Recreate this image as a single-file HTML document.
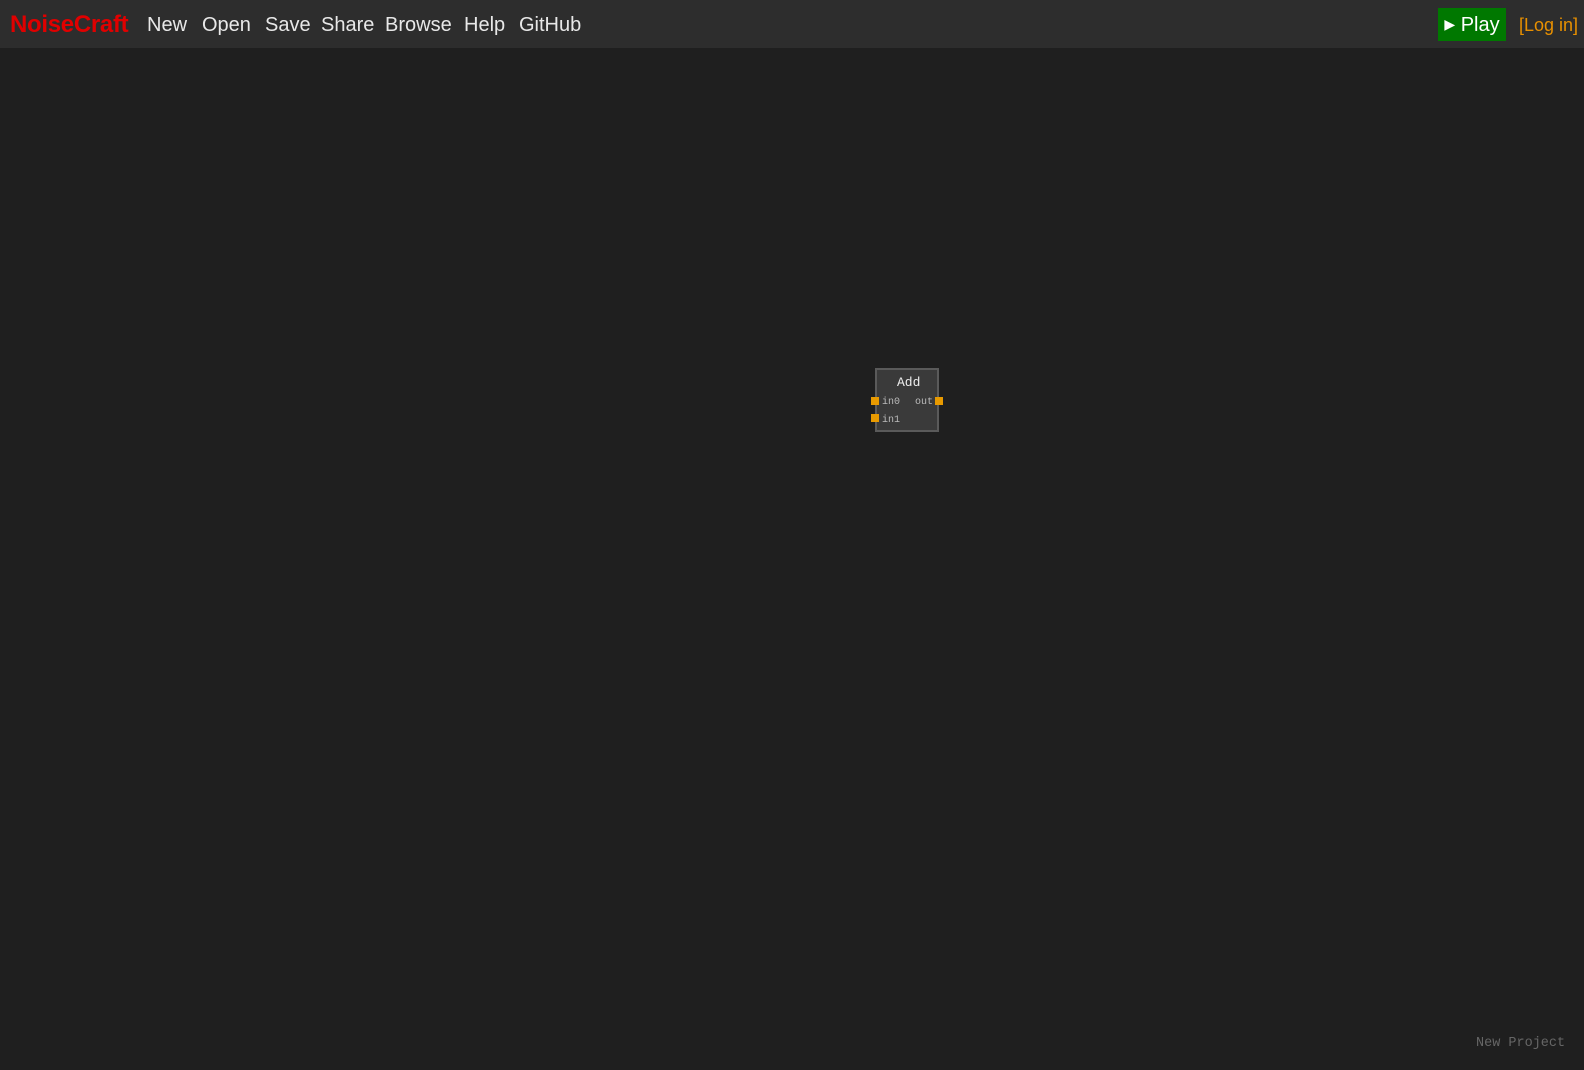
<!DOCTYPE html>
<html><head><style>
body{margin:0;width:1584px;height:1070px;background:#1f1f1f;overflow:hidden;position:relative;font-family:"Liberation Sans",sans-serif}
#hdr{position:absolute;left:0;top:0;width:1584px;height:48px;background:#2d2d2d}
.t{position:absolute;top:14px;font-size:20px;color:#e8e8e8;white-space:nowrap}
#logo{left:10px;color:#e00000;font-weight:bold;font-size:24px;top:11px;letter-spacing:-0.3px}
#play{position:absolute;left:1438px;top:8px;width:68px;height:33px;background:#007800;color:#fff;font-size:20px;line-height:34px;text-align:center}
#play small{font-size:14px;position:relative;top:-2px}
#login{left:1519px;color:#e89000;font-size:18px;top:15px}
#node{position:absolute;left:875px;top:368px;width:64px;height:64px;background:#3a3a3a;border:2px solid #5a5a5a;box-sizing:border-box}
.m{font-family:"Liberation Mono",monospace;position:absolute;white-space:nowrap}
.p{position:absolute;width:8px;height:8px;background:#e89a00}
</style></head><body>
<div id="hdr">
<span class="t" id="logo">NoiseCraft</span>
<span class="t" style="left:147px">New</span>
<span class="t" style="left:202px">Open</span>
<span class="t" style="left:265px">Save</span>
<span class="t" style="left:321px">Share</span>
<span class="t" style="left:385px">Browse</span>
<span class="t" style="left:464px">Help</span>
<span class="t" style="left:519px">GitHub</span>
<div id="play"><small>&#9654;</small> Play</div>
<span class="t" id="login">[Log in]</span>
</div>
<div id="node">
<span class="m" style="left:20px;top:5px;font-size:13px;color:#eee">Add</span>
<span class="m" style="left:5px;top:27px;font-size:10px;color:#bbb">in0</span>
<span class="m" style="left:38px;top:27px;font-size:10px;color:#bbb">out</span>
<span class="m" style="left:5px;top:45px;font-size:10px;color:#bbb">in1</span>
</div>
<div class="p" style="left:871px;top:397px"></div>
<div class="p" style="left:935px;top:397px"></div>
<div class="p" style="left:871px;top:414px"></div>
<span class="m" style="left:1476px;top:1036px;font-size:13.5px;color:#666">New Project</span>
</body></html>
